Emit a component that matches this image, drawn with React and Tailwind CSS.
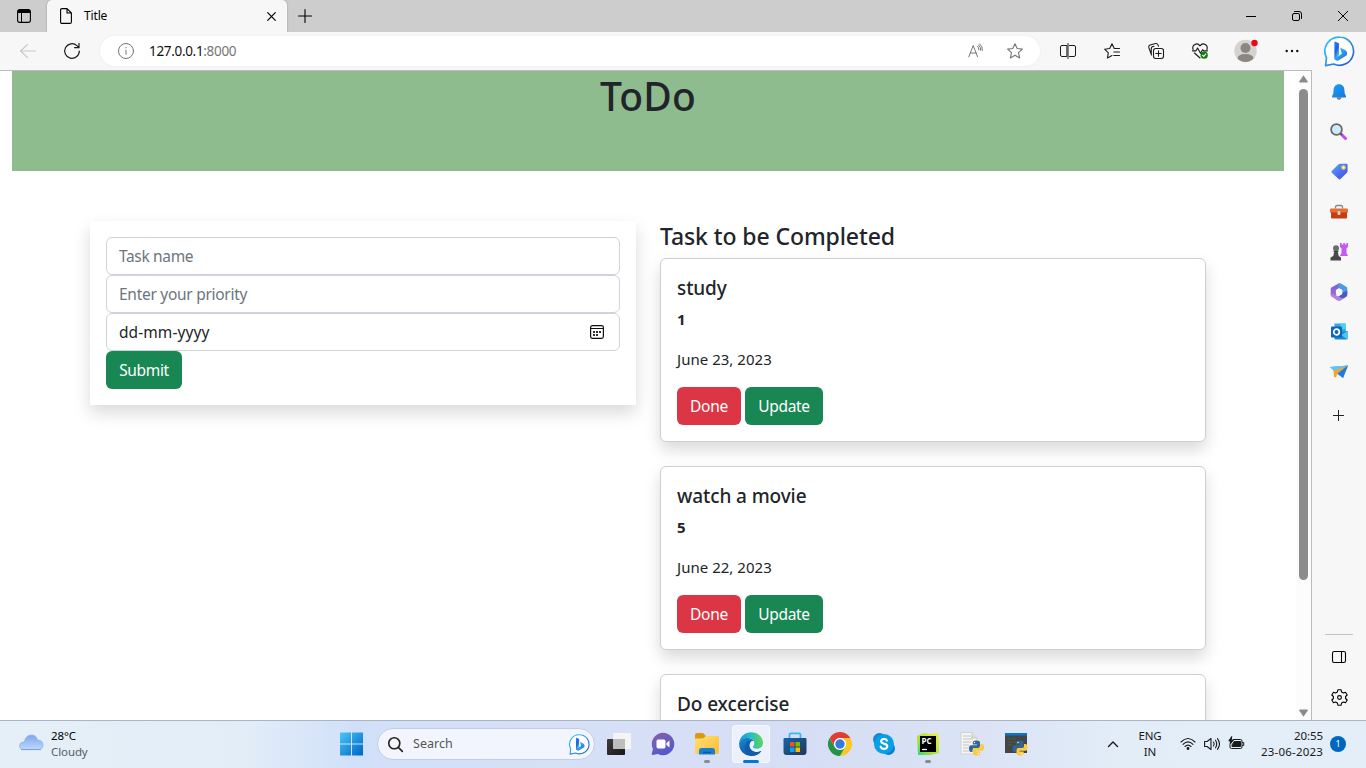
import React from "react";

function Line({ children, size = 16, w = 1, className = "", box = "0 0 16 16" }) {
  return (
    <svg width={size} height={size} viewBox={box} fill="none" stroke="currentColor" strokeWidth={w} strokeLinecap="round" strokeLinejoin="round" className={className + " block shrink-0 overflow-visible"}>
      {children}
    </svg>
  );
}

function Slot({ children, className = "" }) {
  return <div className={"flex shrink-0 items-center justify-center " + className}>{children}</div>;
}

function Bing({ size, id, className = "" }) {
  return (
    <svg width={size} height={size} viewBox="0 0 32 32" className={"block shrink-0 " + className}>
      <defs>
        <linearGradient id={id + "r"} x1="0" y1="0" x2="1" y2="1">
          <stop offset="0" stopColor="#2cc9f5" />
          <stop offset="0.45" stopColor="#2f9bea" />
          <stop offset="1" stopColor="#1d4fc4" />
        </linearGradient>
        <linearGradient id={id + "b"} x1="0" y1="0" x2="0.4" y2="1">
          <stop offset="0" stopColor="#2b7de9" />
          <stop offset="0.55" stopColor="#1f5fe0" />
          <stop offset="1" stopColor="#37bdf5" />
        </linearGradient>
        <linearGradient id={id + "c"} x1="0" y1="0" x2="1" y2="1">
          <stop offset="0" stopColor="#43d3f0" />
          <stop offset="1" stopColor="#1d62e6" />
        </linearGradient>
      </defs>
      <path d="M16.3 1.2A14.5 14.5 0 1 1 10 28.9L1.6 30.6 2.6 22.4A14.5 14.5 0 0 1 16.3 1.2Z" fill="#fff" stroke={"url(#" + id + "r)"} strokeWidth="1.7" strokeLinejoin="round" />
      <path d="M11.500 6.600 14.600 7.900V19.600L11.500 23.600Z" fill={"url(#" + id + "b)"} stroke={"url(#" + id + "b)"} strokeWidth="1.600" strokeLinejoin="round" />
      <path d="M16.6 11.8 22.200 14.800Q25 17 23.200 20.200L14.800 25.300Q12.200 26 11 23.400L18.400 18.400Z" fill={"url(#" + id + "c)"} />
    </svg>
  );
}

function TitleBar() {
  return (
    <div className="flex h-8 shrink-0 bg-[#cdcdcd] text-black">
      <Slot className="h-8 w-[47px]">
        <svg width="14" height="14" viewBox="0 0 14 14" className="ml-px">
          <rect x="0.6" y="0.6" width="12.8" height="12.8" rx="2.2" fill="none" stroke="#000" strokeWidth="1.1" />
          <path d="M1 1h12v3H1z" fill="#000" /><path d="M4.500 4v9" stroke="#000" />
        </svg>
      </Slot>
      <div className="flex w-60 items-center rounded-t-[5px] bg-[#f7f7f7] pr-[11px] pl-[13px] shadow-[0_0_2px_rgba(0,0,0,0.3)]">
        <svg width="12" height="16" viewBox="0 0 12 16" fill="none" stroke="#000" strokeWidth="1.1" strokeLinejoin="round">
          <path d="M.6 2Q.6.6 2 .6H7L11.4 5V14Q11.4 15.4 10 15.4H2Q.6 15.4.6 14ZM7 .6V5h4.4" />
        </svg>
        <span className="ml-3 flex-1 text-[12px] leading-4 tracking-[-0.15px]">Title</span>
        <Line size={9} box="0 0 9 9" w={1.2}><path d="M.7.7 8.3 8.3M8.3.7.7 8.3" /></Line>
      </div>
      <Slot className="w-[35px]"><Line size={14} box="0 0 14 14" w={1.1}><path d="M7 .5v13M.5 7h13" /></Line></Slot>
      <div className="ml-auto flex">
        <Slot className="w-[46px]"><svg width="10" height="10" viewBox="0 0 10 10"><path d="M0 5.5h10" stroke="#000" /></svg></Slot>
        <Slot className="w-[46px]">
          <Line size={10} box="0 0 10 10"><rect x=".5" y="2.5" width="7" height="7" rx="1.5" /><path d="M2.5.5H7A2.5 2.5 0 0 1 9.500 3V7.500" /></Line>
        </Slot>
        <Slot className="w-[46px]"><Line size={10} box="0 0 10 10"><path d="M.3.3 9.700 9.700M9.700.3.3 9.700" /></Line></Slot>
      </div>
    </div>
  );
}

function ToolBar() {
  return (
    <div className="flex h-[38px] shrink-0 items-center bg-[#f7f7f7] text-[#1b1b1b]">
      <Slot className="w-14"><Line className="text-[#c9c9c9]" w={1.1}><path d="M15.500 8H.5M7.500 1.500.5 8l7 6.500" /></Line></Slot>
      <Slot className="w-8"><Line w={1.2}><path d="M15.300 8A7.300 7.300 0 1 1 12.900 2.600L15 4.600M15 .3V4.700H10.600" /></Line></Slot>
      <div className="ml-3 flex h-[30px] w-[940px] items-center rounded-full bg-white pl-[18px] shadow-[0_0_3px_rgba(0,0,0,0.06)]">
        <Line className="text-[#767676]"><circle cx="8" cy="8" r="7.500" /><path d="M8 7.200v4M8 4.400v.5" /></Line>
        <span className="ml-[15px] flex-1 text-[13.5px] leading-5 tracking-[-0.32px] text-[#111]">127.0.0.1<span className="text-[#767676]">:8000</span></span>
        <Line className="mr-[23px] text-[#767676]" w={1}><path d="M.8 13.800 5.200 2.500 9.600 13.800M2.400 10H8M9.600 3.300Q11 4.600 10.900 6.700M11.700.8Q15 3.500 14.400 7.500M10.700 2Q13 4.200 12.700 7.200" /></Line>
        <Line className="mr-[17px] text-[#767676]" w={1.1}><path d="m8 .7 2.200 4.800 5.200.6-3.900 3.600 1.100 5.200L8 12.300l-4.600 2.600 1.100-5.200L.6 6.100l5.200-.6Z" /></Line>
      </div>
      <Slot className="w-14">
        <Line><path d="M6.500 2.500H2Q.5 2.500.5 4v8Q.5 13.500 2 13.500H6.500ZM9.500 2.500H14Q15.500 2.500 15.500 4v8Q15.500 13.500 14 13.500H9.500M8 .5v15" /></Line>
      </Slot>
      <Slot className="w-8">
        <Line w={1.1}><path d="M10.200 5.300 8 .8 5.700 5.500.6 6.200l3.700 3.600-.9 5.200L8 12.500M10 5.500h5.500M9.800 9h5.700M9.800 12.500h5.700" /></Line>
      </Slot>
      <Slot className="ml-3 w-8">
        <Line w={1.1}><rect x="5.500" y="5.500" width="10" height="10" rx="2.200" /><path d="M10.500 7.800v5.400M7.800 10.500h5.400M3.500 12 .8 4.500Q.3 2.700 2 2L7.600.5Q9.300.2 10 1.900L10.500 3.200M3.300 11V5.500Q3.500 3.200 6 3.200" /></Line>
      </Slot>
      <Slot className="ml-3 w-8">
        <Line w={1.15}><path d="M1.100 6.500C-.4 2.500 4.800-1.300 8 2.800c3.200-4.100 8.400-.3 6.900 3.700M.4 7.800H4L5.600 5 8.500 10.300 10.600 6.700 11.600 7.800H15.500M2.500 10 8 15" /><circle cx="12.200" cy="12.200" r="3.600" fill="#107c10" stroke="none" /><path d="m10.600 12.400 1.100 1 2-2.300" stroke="#fff" /></Line>
      </Slot>
      <Slot className="ml-[13px] w-8">
        <svg width="24" height="24" viewBox="0 0 24 24" className="overflow-visible">
          <circle cx="12.500" cy="12" r="11.200" fill="#d5d2cf" />
          <circle cx="12.500" cy="9" r="5" fill="#8b8682" />
          <path d="M4.500 19.500Q5 15 12.500 15t8 4.500A11 11 0 0 1 4.500 19.500Z" fill="#8b8682" />
          <circle cx="21.500" cy="4" r="3.200" fill="#e80b13" />
        </svg>
      </Slot>
      <Slot className="ml-[15px] w-8">
        <svg width="14" height="4" viewBox="0 0 14 4" fill="#111"><circle cx="1.700" cy="2" r="1.200" /><circle cx="7" cy="2" r="1.200" /><circle cx="12.300" cy="2" r="1.200" /></svg>
      </Slot>
      <Slot className="mr-[11px] ml-auto w-8"><Bing size={31} id="top" /></Slot>
    </div>
  );
}

function Bell() {
  return (
    <svg width="16" height="16" viewBox="0 0 16 16">
      <defs><linearGradient id="bell" x1="0" y1="0" x2="1" y2="1"><stop stopColor="#1ca2ee" /><stop offset="1" stopColor="#1874dc" /></linearGradient></defs>
      <path d="M5.500 13.500h5Q10 15.800 8 15.800t-2.500-2.300Z" fill="#777" />
      <path d="M8 .3C4.500.3 2.700 2.800 2.600 6L2.300 9.500 1 12.300Q.8 13.500 2 13.500H14q1.200 0 1-1.200L13.700 9.500 13.400 6C13.300 2.800 11.500.3 8 .3Z" fill="url(#bell)" />
    </svg>
  );
}

function Lens() {
  return (
    <svg width="17" height="17" viewBox="0 0 17 17" className="-mt-0.5 -ml-0.5">
      <path d="m11.500 11.500 4 4" stroke="#c04af5" strokeWidth="3" strokeLinecap="round" />
      <path d="m10 10 2 2" stroke="#555" strokeWidth="1.800" />
      <circle cx="6.500" cy="6.500" r="5.400" fill="#cdeafd" stroke="#666" strokeWidth="1.700" />
    </svg>
  );
}

function Tag() {
  return (
    <svg width="17" height="17" viewBox="0 0 17 17" className="-mt-0.5">
      <defs><linearGradient id="tag" x1="0" y1="0" x2="1" y2="1"><stop stopColor="#58a8fb" /><stop offset="1" stopColor="#4243e8" /></linearGradient></defs>
      <path d="M9 .8H15.300q1.300 0 1.300 1.300V8q0 1-.7 1.700L9.500 16q-.9.800-1.800 0L.8 9.800Q0 8.900.8 8L7.300 1.500Q8 .8 9 .8Z" fill="url(#tag)" />
      <circle cx="12.500" cy="4.500" r="1.700" fill="#fff" stroke="#f2ca3c" strokeWidth="1.300" />
    </svg>
  );
}

function Toolbox() {
  return (
    <svg width="18" height="16" viewBox="0 0 18 16">
      <path d="M5.500 4.500V3Q5.500 1.500 7 1.500H11q1.500 0 1.500 1.500V4.500" fill="none" stroke="#888" strokeWidth="1.300" />
      <rect x="0" y="4.500" width="18" height="4.500" rx="1.200" fill="#e76d31" />
      <path d="M1 8.500H17v5q0 1-1 1H2q-1 0-1-1Z" fill="#c63d12" />
      <rect x="7.500" y="7" width="3" height="4" rx="1" fill="#ccc" />
    </svg>
  );
}

function Chess() {
  return (
    <svg width="18" height="18" viewBox="0 0 18 18">
      <path d="M10 0h1.700v1.600h1.600V0h1.600v1.600h1.500V0H18V4L16.500 5.200V10L18 13H10l1.500-3V5.200L10 4Z" fill="#c45af5" />
      <circle cx="6" cy="5.200" r="3" fill="#6d6d6d" />
      <path d="M3.500 7.800h5v1.300H7.800L8.700 13l2.300 1.500V17.500H.5V14.500L3.300 13l.9-3.900H3.500Z" fill="#484848" />
    </svg>
  );
}

function Office() {
  return (
    <svg width="18" height="18" viewBox="0 0 18 18">
      <defs><linearGradient id="off" x1="0" y1="0" x2="0" y2="1"><stop stopColor="#6a66d9" /><stop offset="1" stopColor="#a867cf" /></linearGradient></defs>
      <path d="M9 .3 1.800 4.300Q.7 5 .7 6V12l5.500 1V7.300L12.500 3 9 .3Z" fill="url(#off)" />
      <path d="M8 .7Q9.500-.1 11 .5L16.300 3.700q1 .6 1 1.800V10L12.300 11.500V7L8.500 5Z" fill="#4a9ce7" />
      <path d="M17.300 8V12q0 1.200-1 1.800L10.500 17.200q-1.500.8-3 0L5 15.700 12.300 11V9.500Z" fill="#4a5bc6" />
      <path d="M.7 10V12q0 1.200 1 1.800L7.500 17.200q1.500.8 3 0L13 15.500 6 12.500Z" fill="#b283db" />
      <path d="M9 5.300 12.200 7.100V10.700L9 12.600 5.900 10.700V7.100Z" fill="#f7f7f7" />
    </svg>
  );
}

function Outlook() {
  return (
    <svg width="17" height="17" viewBox="0 0 17 17" className="-mt-0.5">
      <path d="M3.500.5h10.500q.8 0 .8.8V9H3.500Z" fill="#32a9e7" /><path d="M9.500.5h4.500q.8 0 .8.8V6H9.500Z" fill="#4fd0fa" />
      <path d="M3.500 9 16.700 8V15.500q0 1-1 1H4.500q-1 0-1-1Z" fill="#1688d6" />
      <path d="m16.700 8-6.500 4 5.800 4.300q.7-.2.7-1Z" fill="#55c3f5" />
      <rect x="0" y="3.500" width="11" height="11" rx="1" fill="#0b66bd" />
      <circle cx="5.500" cy="9" r="2.800" fill="none" stroke="#fff" strokeWidth="1.700" />
    </svg>
  );
}

function Plane() {
  return (
    <svg width="18" height="14" viewBox="0 0 18 14">
      <path d="M0 2 18 .5 13 13 8 9.500Z" fill="#2b9bf0" />
      <path d="M0 2 18 .5 5 6Z" fill="#5cc5fb" />
      <path d="M3.500 5.800 17.500.7 7.500 8.200 6 12.500 4 12Z" fill="#f5a623" />
      <path d="m8 8.500 10-8L13 13Z" fill="#2479df" />
    </svg>
  );
}

function SideBar() {
  const items = [<Bell />, <Lens />, <Tag />, <Toolbox />, <Chess />, <Office />, <Outlook />, <Plane />];
  return (
    <aside className="flex w-[54px] shrink-0 flex-col items-center bg-[#f7f7f7] pt-0.5">
      {items.map((item, i) => <Slot key={i} className="h-10 w-10">{item}</Slot>)}
      <Slot className="h-[47px] w-10"><svg width="12" height="12" viewBox="0 0 12 12"><path d="M5.500 0v11M0 5.500h11" stroke="#222" /></svg></Slot>
      <div className="mt-auto h-px w-7 bg-[#c2c2c2]" />
      <Slot className="mt-0.5 h-10 w-10">
        <Line size={14} box="0 0 14 14" className="text-black" w={1.1}><rect x=".5" y="1.500" width="13" height="11" rx="1.800" /><path d="M9.500 1.500v11" /></Line>
      </Slot>
      <Slot className="mb-[3px] h-10 w-10">
        <Line size={17} box="0 0 17 17" className="text-black" w={1.1}>
          <path d="M7 .7h3l.6 2.200 1.800 1L14.500 3.200 16.200 6 14.600 7.500v2L16.200 11l-1.700 2.800-2.100-.7-1.800 1L10 16.300H7l-.6-2.200-1.800-1-2.100.7L.8 11 2.400 9.500v-2L.8 6 2.500 3.200l2.100.7 1.800-1Z" />
          <circle cx="8.500" cy="8.500" r="1.900" />
        </Line>
      </Slot>
    </aside>
  );
}

function ScrollBar() {
  return (
    <div className="flex w-[15px] shrink-0 flex-col items-center bg-[#fcfcfc] pt-1 pb-[3px]">
      <svg width="9" height="8" viewBox="0 0 9 8"><path d="M4.500.3 8.800 6.500Q9 7.500 8 7.500H1Q0 7.500.2 6.500Z" fill="#8b8b8b" /></svg>
      <div className="mt-1.5 h-[491px] w-[9px] rounded-full bg-[#8b8b8b]" />
      <svg width="9" height="8" viewBox="0 0 9 8" className="mt-auto"><path d="M4.500 7.700 8.800 1.500Q9 .5 8 .5H1Q0 .5.2 1.500Z" fill="#8b8b8b" /></svg>
    </div>
  );
}

const tasks = [
  { name: "study", priority: "1", date: "June 23, 2023" },
  { name: "watch a movie", priority: "5", date: "June 22, 2023" },
  { name: "Do excercise" },
];

function TaskCard({ task }) {
  return (
    <div className="mb-6 h-[184px] rounded-[6px] border border-[#cfcfcf] bg-white p-4 shadow-[0_8px_16px_rgba(0,0,0,0.15)]">
      <h5 className="mb-2 text-[19px] leading-[26px] font-medium tracking-[-0.1px]">{task.name}</h5>
      {task.date && (
        <>
          <h6 className="mb-[18px] text-[15px] leading-5 font-bold">{task.priority}</h6>
          <p className="mb-4 text-[15px] leading-6 tracking-[0.03px]">{task.date}</p>
          <div className="flex gap-1 text-[15.5px] tracking-[-0.3px] text-white">
            <button className="h-[38px] w-16 rounded-[6px] bg-[#dc3545] pt-0.5">Done</button>
            <button className="h-[38px] w-[78px] rounded-[6px] bg-[#198754] pt-0.5">Update</button>
          </div>
        </>
      )}
    </div>
  );
}

function Page() {
  return (
    <main className="h-[649px] min-w-0 flex-1 overflow-hidden bg-white px-3 text-[#212529]">
      <header className="h-[100px] bg-[#8fbc8f] pt-px text-center">
        <h1 className="text-[39px] leading-[48px] font-medium tracking-[0.2px]">ToDo</h1>
      </header>
      <div className="mt-[50px] ml-[78px] flex items-start gap-6">
        <form className="h-[184px] w-[546px] p-4 text-[15.5px] tracking-[-0.35px] shadow-[0_8px_16px_rgba(0,0,0,0.15)]">
          <div className="flex h-[38px] items-center rounded-[6px] border border-[#ced4da] px-3 pt-0.5 text-[#6c757d]">Task name</div>
          <div className="flex h-[38px] items-center rounded-[6px] border border-[#ced4da] px-3 pt-0.5 tracking-[-0.28px] text-[#6c757d]">Enter your priority</div>
          <div className="flex h-[38px] items-center justify-between rounded-[6px] border border-[#ced4da] pr-[15px] pl-3">
            <span className="pt-0.5 tracking-[0.08px]">dd-mm-yyyy</span>
            <svg width="14" height="14" viewBox="0 0 14 14"><rect x=".6" y=".6" width="12.800" height="12.800" rx="1.800" fill="none" stroke="#111" strokeWidth="1.200" /><path d="M1 3.500h12" stroke="#111" /><path d="M3 6h2v2H3zM6 6h2v2H6zM9 6h2v2H9zM3 9h2v2H3zM6 9h2v2H6z" fill="#333" /></svg>
          </div>
          <button className="block h-[38px] w-[76px] rounded-[6px] bg-[#198754] pt-0.5 text-white">Submit</button>
        </form>
        <section className="w-[546px]">
          <h4 className="mb-2 pt-0.5 text-[23px] leading-[27px] font-medium tracking-[-0.1px]">Task to be Completed</h4>
          {tasks.map((t) => <TaskCard key={t.name} task={t} />)}
        </section>
      </div>
    </main>
  );
}

function Python({ x, y }) {
  return (
    <g transform={"translate(" + x + " " + y + ")"}>
      <path d="M7 0Q3.800 0 3.800 2V4H8v.7H2Q0 4.700 0 8t2 3.400H3.500V9.500Q3.500 7.500 5.500 7.500H9q2 0 2-2V2Q11 0 7 0Z" fill="#33658f" />
      <path d="M8 15q3.200 0 3.200-2V11H7v-.7h6q2 0 2-3.300t-2-3.400H11.500V5.500q0 2-2 2H6q-2 0-2 2V13q0 2 4 2Z" fill="#fbcc42" />
      <circle cx="5.500" cy="2" r=".7" fill="#fff" /><circle cx="9.500" cy="13" r=".7" fill="#fff" />
    </g>
  );
}

function TaskView() {
  return (
    <svg width="24" height="24" viewBox="0 0 24 24">
      <defs><linearGradient id="tvd" x1="0" y1="0" x2="1" y2="1"><stop stopColor="#3d3d3d" /><stop offset="1" stopColor="#181818" /></linearGradient></defs>
      <rect x="0" y="7" width="18" height="16" rx="1" fill="url(#tvd)" />
      <rect x="6" y="1" width="18" height="16" rx="1" fill="#f4f4f4" /><path d="M6 7h12v10H6Z" fill="#bdbdbd" />
    </svg>
  );
}
function Chat() {
  return (
    <svg width="24" height="24" viewBox="0 0 24 24">
      <defs><linearGradient id="chat" x1="0" y1="0" x2=".6" y2="1"><stop stopColor="#8a61a8" /><stop offset="1" stopColor="#5258cc" /></linearGradient></defs>
      <path d="M12 .8A11.200 11.200 0 1 1 7 22L1.500 23Q.5 23 .7 22L2 17A11.200 11.200 0 0 1 12 .8Z" fill="url(#chat)" />
      <rect x="5.500" y="7.500" width="9" height="9" rx="1.700" fill="#fff" /><path d="m15.500 11 3-2.500v7L15.500 13Z" fill="#fff" />
    </svg>
  );
}
function Folder() {
  return (
    <svg width="24" height="24" viewBox="0 0 24 24">
      <defs><linearGradient id="fold" x1="0" y1="0" x2="1" y2="1"><stop stopColor="#ffdf7a" /><stop offset="1" stopColor="#f9bd2c" /></linearGradient></defs>
      <path d="M0 3Q0 1 2 1H8L11 4H22q2 0 2 2v5H0Z" fill="#dc9912" />
      <path d="M0 6.500H8L11 4H22.500Q24 4 24 5.500V20q0 2-2 2H2Q0 22 0 20Z" fill="url(#fold)" />
      <path d="M4 22.500V18.500q0-2.500 2.500-2.500H17.500q2.500 0 2.500 2.500v4Z" fill="#197ecb" /><path d="M8 20.500h8" stroke="#095b9f" strokeWidth="1.500" />
    </svg>
  );
}
function Edge() {
  return (
    <svg width="24" height="24" viewBox="0 0 24 24">
      <defs>
        <linearGradient id="e1" x1="0" y1=".3" x2="1" y2=".2"><stop stopColor="#1595dc" /><stop offset=".5" stopColor="#29bfc5" /><stop offset="1" stopColor="#68d947" /></linearGradient>
        <linearGradient id="e2" x1="0" y1="0" x2=".7" y2="1"><stop stopColor="#188bda" /><stop offset="1" stopColor="#0c4d99" /></linearGradient>
      </defs>
      <path d="M.2 10.800C1 4.500 6 .2 12 .2 19 .2 24 5 24 10.800c0 3.500-2.500 6-6 6-3.200 0-4.500-1.200-4-2.200.9-1.200 1.300-2 1.300-3.300C15.300 8 12 6 8.500 6 4.500 6 1.500 8 .2 10.800Z" fill="url(#e1)" />
      <path d="M.2 10.800C1.500 7 5 5.700 8.500 6c3 .2 5.500 1.500 6.500 3.500-1.200-1-4.500-.5-5 3-.5 4.500 4 8.200 8.500 7.500 2-.3 3.500-1.200 3.800-1C19.500 23 15.500 24 12 23.900 5 23.800-.5 18 .2 10.800Z" fill="url(#e2)" />
      <path d="M8.500 9.500c-4 4-3 11 2.500 14.200 4.800.8 9.300-1.500 11.300-4.700-3 1.800-7.500 1.500-10-1.200C10 15.200 10 12 12 9.500 11 9 9.500 8.800 8.500 9.500Z" fill="#125dac" />
    </svg>
  );
}
function Store() {
  return (
    <svg width="24" height="24" viewBox="0 0 24 24">
      <defs><linearGradient id="store" x1="0" y1="0" x2="1" y2="1"><stop stopColor="#1466ad" /><stop offset="1" stopColor="#243557" /></linearGradient></defs>
      <path d="M6.500 7V3Q6.500 1.300 8 1.300H16q1.500 0 1.500 1.700V7" fill="none" stroke="#35bbef" strokeWidth="1.800" />
      <path d="M.5 7Q.5 6 1.500 6h21q1 0 1 1V20q0 3-3 3H3.500q-3 0-3-3Z" fill="url(#store)" />
      <path d="M7 10h4.500v4.500H7Z" fill="#f25022" /><path d="M12.500 10H17v4.500h-4.500Z" fill="#7fba00" /><path d="M7 15.500h4.500V20H7Z" fill="#00a4ef" /><path d="M12.500 15.500H17V20h-4.500Z" fill="#ffb900" />
    </svg>
  );
}
function Chrome() {
  return (
    <svg width="24" height="24" viewBox="0 0 24 24">
      <circle cx="12" cy="12" r="12" fill="#fff" />
      <path d="M1.600 6A12 12 0 0 1 22.400 6H12A6 6 0 0 0 6.800 15Z" fill="#df3e32" />
      <path d="M22.400 6A12 12 0 0 1 12 24L17.200 15A6 6 0 0 0 12 6Z" fill="#fbc725" />
      <path d="M12 24A12 12 0 0 1 1.600 6L6.800 15A6 6 0 0 0 17.200 15Z" fill="#269344" />
      <circle cx="12" cy="12" r="5.800" fill="#fff" /><circle cx="12" cy="12" r="4.700" fill="#3679df" />
    </svg>
  );
}
function Skype() {
  return (
    <svg width="22" height="22" viewBox="0 0 22 22">
      <circle cx="6.500" cy="6.500" r="6.500" fill="#1583d7" /><circle cx="15.500" cy="15.500" r="6.500" fill="#087fd5" /><circle cx="11" cy="11" r="10" fill="#0a9fe5" />
      <path d="M14 7.600Q13.300 5.900 11 6 8.200 6.100 8.200 8.200q0 1.700 2.600 2.400 3.600.8 3.500 2.900-.2 2.400-3.300 2.400-2.700 0-3.400-2.200" fill="none" stroke="#fff" strokeWidth="2.100" strokeLinecap="round" />
    </svg>
  );
}
function Pycharm() {
  return (
    <svg width="22" height="22" viewBox="0 0 22 22">
      <defs><linearGradient id="pc" x1="0" y1="1" x2="1" y2="0"><stop stopColor="#20d889" /><stop offset=".35" stopColor="#a4df36" /><stop offset="1" stopColor="#f3ee3c" /></linearGradient></defs>
      <path d="M0 3 7 0 14 1 21 0 22 8V20L13 22H1Z" fill="url(#pc)" /><path d="M3 3h16v16H3Z" fill="#000" />
      <text x="4.500" y="11.200" fontSize="8" fontWeight="700" fill="#fff" fontFamily="Open Sans, sans-serif">PC</text><path d="M5 16.500h5" stroke="#fff" strokeWidth="1.300" />
    </svg>
  );
}
function PyDoc() {
  return (
    <svg width="24" height="24" viewBox="0 0 24 24">
      <path d="M1 .5H12L17 6V22H1Z" fill="#f4f4f4" stroke="#c7c7c7" strokeWidth=".7" /><path d="M12 .5V6h5" fill="#ddd" stroke="#bbb" strokeWidth=".7" />
      <path d="M3 4h8M3 7h10M3 10h8M3 13h6M3 16h6M3 19h6" stroke="#c4c4c4" /><Python x={9} y={8.5} />
    </svg>
  );
}
function PyTerm() {
  return (
    <svg width="24" height="24" viewBox="0 0 24 24">
      <path d="M1 1h22v20H1Z" fill="#454545" /><path d="M1 1h22v2.500H1Z" fill="#0875cf" /><path d="M4 7h3M8 7h4M4 10h5M4 13h4M10 10h2" stroke="#42683f" /><Python x={8.5} y={8.5} />
    </svg>
  );
}

function TaskBar() {
  const apps = [
    { icon: <TaskView /> }, { icon: <Chat /> }, { icon: <Folder />, mark: "run" }, { icon: <Edge />, mark: "active" }, { icon: <Store /> },
    { icon: <Chrome /> }, { icon: <Skype /> }, { icon: <Pycharm />, mark: "run" }, { icon: <PyDoc /> }, { icon: <PyTerm /> },
  ];
  return (
    <footer className="flex h-12 shrink-0 items-stretch border-t border-[#aab4c5] bg-[linear-gradient(90deg,#e4eff7_0%,#e2edf8_18%,#d1e0fa_26%,#d6e0f6_40%,#d6def5_60%,#dbe3f5_72%,#e2edf8_82%,#e3eef8_100%)] pb-px">
      <div className="flex w-[330px] items-center pl-[19px]">
        <svg width="25" height="17" viewBox="0 0 25 17" className="-mt-1">
          <defs><linearGradient id="cloud" x1="0" y1="0" x2="0" y2="1"><stop stopColor="#7ca7ee" /><stop offset="1" stopColor="#bfd8fa" /></linearGradient></defs>
          <path d="M5 15.500Q.5 15.500.5 11.500 1 8 5.500 7.800 6.500 1 12.500 1q4.500 0 6 5 5.500.3 5.500 5 0 4.500-5 4.500Z" fill="url(#cloud)" stroke="#8eb4ee" strokeWidth=".8" /><path d="M2 15.600h20" stroke="#719fea" />
        </svg>
        <div className="-mt-px ml-[7px] text-[11.5px] leading-4 tracking-[-0.1px]"><div className="text-black">28°C</div><div className="text-[#555c66]">Cloudy</div></div>
      </div>
      <Slot className="w-[43px]">
        <svg width="24" height="24" viewBox="0 0 24 24" className="-ml-0.5"><defs><linearGradient id="win" gradientUnits="userSpaceOnUse" x1="0" y1="0" x2="23" y2="23"><stop stopColor="#4acbfa" /><stop offset="1" stopColor="#0067c6" /></linearGradient></defs><path d="M1 .5h11v11H1ZM13 .5h11v11H13ZM1 12.500h11v11H1ZM13 12.500h11v11H13Z" fill="url(#win)" /></svg>
      </Slot>
      <div className="my-auto ml-1 flex h-8 w-[218px] items-center rounded-full border border-[#c3cee6] bg-[#f2f5fd] pr-1 pl-2.5">
        <Line size={15} w={1.7} className="text-[#222]"><circle cx="6.700" cy="6.700" r="5.900" /><path d="m11 11 4.300 4.300" /></Line>
        <span className="ml-2.5 flex-1 text-[12.5px] tracking-[0.05px] text-[#555]">Search</span>
        <Bing size={21} id="task" />
      </div>
      <div className="ml-0.5 flex">
        {apps.map((a, i) => (
          <div key={i} className="relative flex w-[44.1px] items-center justify-center">
            <div className={a.mark === "active" ? "flex size-[38px] items-center justify-center rounded-[4px] border border-white/50 bg-white/55" : "flex size-[38px] items-center justify-center"}>{a.icon}</div>
            {a.mark && <span className={a.mark === "active" ? "absolute bottom-1 h-[3px] w-4 rounded-full bg-[#0078d4]" : "absolute bottom-1 h-[3px] w-1.5 rounded-full bg-[#858b99]"} />}
          </div>
        ))}
      </div>
      <div className="ml-auto flex items-center pr-5 text-[#191919]">
        <Slot className="w-6"><Line size={10} box="0 0 10 10" w={1.4}><path d="M.5 7.500 5 3l4.500 4.500" /></Line></Slot>
        <div className="ml-[13px] w-6 text-center text-[11.5px] leading-4 tracking-[-0.1px]"><div>ENG</div><div>IN</div></div>
        <Slot className="ml-3.5 w-6"><Line w={1.1}><path d="M1 6Q8-1 15 6M3 8.300Q8 3.500 13 8.300M5 10.500Q8 7.700 11 10.500" /><circle cx="8" cy="12.500" r=".9" fill="currentColor" /></Line></Slot>
        <Slot className="w-6"><Line w={1.1}><path d="M.6 5.500H3L7 2.500v11L3 10.500H.6ZM9.500 6Q11 8 9.500 10M11.500 4.200Q14 8 11.500 11.800M13.500 2.700Q17.500 8 13.500 13.300" /></Line></Slot>
        <Slot className="w-6"><Line><path d="M5.500 3.500h7q1.500 0 1.500 1.500V11q0 1.500-1.500 1.500H3.500Q2 12.500 2 11V9" /><path d="M6.500 5.500h6v5H4V9.300Z" fill="currentColor" /><path d="M14.700 6.500h1v3h-1" /><path d="M3.500.8.8 5H2.700L2 8.300 5.500 4H3.500Z" fill="currentColor" /></Line></Slot>
        <div className="-mt-px ml-2 w-[67px] text-right text-[11.5px] leading-4 tracking-[0.2px] whitespace-nowrap"><div className="tracking-[-0.1px]">20:55</div><div className="flex justify-end">23-06-2023</div></div>
        <Slot className="ml-[7px] size-4 rounded-full bg-[#0067c0] text-[9px] leading-4 text-white">1</Slot>
      </div>
    </footer>
  );
}

export default function App() {
  return (
    <div className="flex h-[768px] w-[1366px] flex-col overflow-hidden font-['Noto_Sans','Open_Sans',sans-serif]">
      <TitleBar />
      <ToolBar />
      <div className="flex h-[650px] shrink-0">
        <div className="flex w-[1312px] border-t border-r border-[#bcbcbc]">
          <Page />
          <ScrollBar />
        </div>
        <SideBar />
      </div>
      <TaskBar />
    </div>
  );
}
